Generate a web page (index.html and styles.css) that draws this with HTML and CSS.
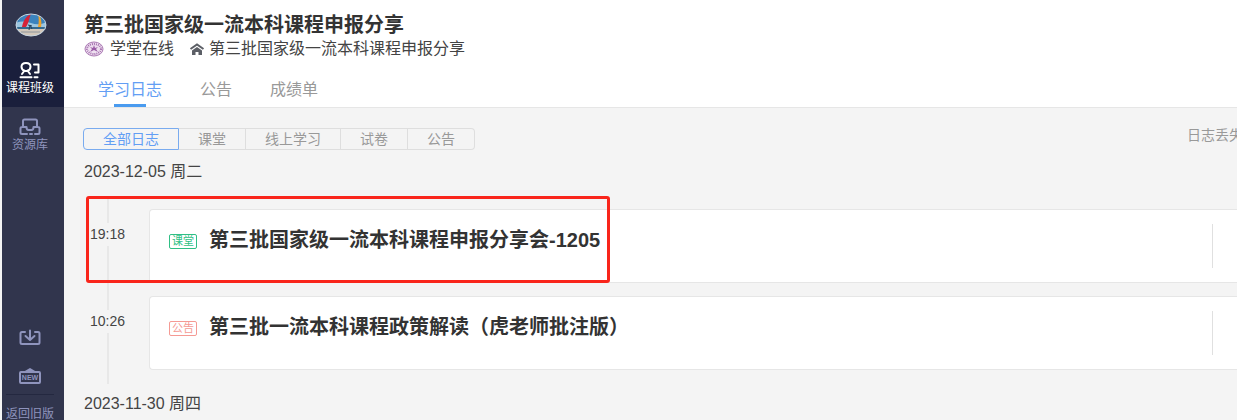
FILE: index.html
```html
<!DOCTYPE html>
<html lang="zh-CN">
  <head>
    <meta charset="UTF-8" />
    <meta name="viewport" content="width=device-width, initial-scale=1.0" />
    <title>第三批国家级一流本科课程申报分享</title>
    <link rel="stylesheet" href="styles.css" />
  </head>
  <body>
    <nav class="sidebar">
      <svg class="avatar" viewBox="0 0 32 24">
        <defs>
          <clipPath id="oval"><ellipse cx="16" cy="12" rx="15" ry="11" /></clipPath>
        </defs>
        <g clip-path="url(#oval)">
          <rect width="32" height="24" fill="#3b83bd" />
          <path d="M0 10q8-3 16 0t16-1v7H0z" fill="#9cc6e0" />
          <rect y="14" width="32" height="2" fill="#34698f" />
          <rect y="16" width="32" height="8" fill="#d3c8bb" />
          <path d="M7 14C8 8 11 3 16 1c-2 4-2 9-5 13z" fill="#d52238" />
          <path d="M23 14c1-5 1-9 0-13 3 3 4 8 3 13z" fill="#eda32d" />
          <path d="M14 17l1-5 2 4M13 12l4 1" stroke="#27415a" fill="none" />
          <path d="M6 19h19" stroke="#8e969d" />
        </g>
        <ellipse cx="16" cy="12" rx="15" ry="11" fill="none" stroke="#c9d5df" />
      </svg>
      <a class="nav-item active" href="#">
        <svg class="nav-icon" viewBox="0 0 22 18">
          <path d="M5.500 10C3.300 9 2.500 7.500 2.500 5.800 2.500 3.400 4.500 2 7 2s4.500 1.400 4.500 3.800c0 1.700-.8 3.200-3 4.200M5.500 9.500 3 13M8.500 9.500l2.500 3.500M5.500 10h3M15 3.500h4.500v8H16M1.500 16.200h11M15.500 16.200h3" />
        </svg>
        <span>课程班级</span>
      </a>
      <a class="nav-item" href="#">
        <svg class="nav-icon" viewBox="0 0 22 18">
          <path d="M4 9V3q0-1.500 1.500-1.500h11Q18 1.500 18 3v6M8 16H3q-1.500 0-1.500-1.500v-4Q1.500 9 3 9h4.500q0 3 2 3h3q2 0 2-3H19q1.500 0 1.500 1.500v4Q20.500 16 19 16h-3M11 16h2" />
        </svg>
        <span>资源库</span>
      </a>
      <div class="nav-bottom">
        <a class="tool" href="#" aria-label="下载">
          <svg class="nav-icon" viewBox="0 0 22 18">
            <path d="M6 3H3Q1.500 3 1.500 4.500v9Q1.500 15 3 15h16q1.500 0 1.500-1.500v-9Q20.500 3 19 3h-3M11 1.500v9M6.500 7l4.500 4 4.500-4" />
          </svg>
        </a>
        <a class="tool" href="#" aria-label="新功能">
          <svg class="nav-icon" viewBox="0 0 22 18">
            <rect x="1" y="5" width="20" height="11" rx="1" />
            <path d="M6 5l5-3 5 3" />
            <text x="11" y="13">NEW</text>
          </svg>
        </a>
        <a class="old-version" href="#">返回旧版</a>
      </div>
    </nav>

    <main class="main">
      <header class="header">
        <h1>第三批国家级一流本科课程申报分享</h1>
        <div class="meta">
          <svg class="school-logo" viewBox="0 0 20 16">
            <ellipse cx="10" cy="8" rx="9" ry="7" fill="#eee0f0" stroke="#aa79b3" />
            <ellipse cx="10" cy="8" rx="7" ry="5" fill="none" stroke="#a56eaf" stroke-width="2" stroke-dasharray="1 1" />
            <path d="M10 4l1 3 3-1-2 2 2 3-4-2-4 2 2-3-2-2 3 1z" fill="#9a5ca6" />
          </svg>
          <span class="school">学堂在线</span>
          <svg class="home" viewBox="0 0 16 16">
            <path d="M1.500 8 8 3.500 14.500 8" fill="none" stroke="#5c5f66" stroke-width="2" />
            <path d="M3 9.500 8 6l5 3.500V14H9.500v-3h-3v3H3z" fill="#5c5f66" />
          </svg>
          <span>第三批国家级一流本科课程申报分享</span>
        </div>
        <div class="tabs">
          <a class="tab active" href="#">学习日志</a>
          <a class="tab" href="#">公告</a>
          <a class="tab" href="#">成绩单</a>
        </div>
      </header>

      <div class="toolbar">
        <div class="filters">
          <button class="active">全部日志</button>
          <button>课堂</button>
          <button>线上学习</button>
          <button>试卷</button>
          <button>公告</button>
        </div>
        <a class="lost" href="#">日志丢失</a>
      </div>

      <h2 class="date">2023-12-05 周二</h2>
      <div class="timeline">
        <div class="entry">
          <div class="time"><span>19:18</span></div>
          <div class="card">
            <span class="badge lesson">课堂</span>
            <h3>第三批国家级一流本科课程申报分享会-1205</h3>
            <span class="divider"></span>
          </div>
          <div class="highlight"></div>
        </div>
        <div class="entry">
          <div class="time"><span>10:26</span></div>
          <div class="card">
            <span class="badge notice">公告</span>
            <h3>第三批一流本科课程政策解读（虎老师批注版）</h3>
            <span class="divider"></span>
          </div>
        </div>
      </div>
      <h2 class="date">2023-11-30 周四</h2>
    </main>
  </body>
</html>
```
FILE: styles.css
```css
* {
  box-sizing: border-box;
}

body {
  display: flex;
  height: 100vh;
  margin: 0;
  padding-left: 2px;
  overflow: hidden;
  background-color: #f4f4f4;
  color: #444;
  font-family: "Liberation Sans", "Noto Sans CJK SC", sans-serif;
}

a {
  color: inherit;
  text-decoration: none;
}

h1,
h2,
h3 {
  margin: 0;
}

.sidebar {
  display: flex;
  flex-direction: column;
  align-items: center;
  flex: none;
  width: 62px;
  height: 100vh;
  overflow: hidden;
  background-color: #31354d;
  color: #8f94bd;
  font-size: 12px;
}

.avatar {
  flex: none;
  width: 32px;
  height: 24px;
  margin: 13px 4px 13px 0;
}

.nav-item {
  display: flex;
  flex-direction: column;
  align-items: center;
  width: 100%;
  height: 57px;
  padding: 11px 6px 0 0;
  line-height: 18px;
  white-space: nowrap;
}

.nav-item.active {
  background-color: #1a1f3c;
  color: #fff;
}

.nav-icon {
  width: 22px;
  height: 18px;
  fill: none;
  stroke: currentColor;
  stroke-width: 2;
  stroke-linecap: round;
  stroke-linejoin: round;
}

.nav-icon text {
  fill: currentColor;
  stroke: none;
  font-size: 7px;
  font-weight: bold;
  text-anchor: middle;
}

.nav-bottom {
  display: flex;
  flex-direction: column;
  align-items: center;
  margin-top: auto;
  margin-right: 6px;
}

.tool {
  display: flex;
  height: 38px;
}

.old-version {
  margin-top: -11px;
  padding-top: 13px;
  border-top: 1px solid #242840;
  line-height: 12px;
  white-space: nowrap;
}

.main {
  flex: 1;
  min-width: 0;
}

.header {
  height: 108px;
  padding: 12px 20px 0;
  border-bottom: 1px solid #e6e6e6;
  background-color: #fff;
}

h1 {
  color: #333;
  font-size: 20px;
  line-height: 27px;
}

.meta {
  display: flex;
  align-items: center;
  font-size: 16px;
  line-height: 20px;
}

.school-logo {
  width: 20px;
  height: 16px;
  margin-right: 6px;
}

.home {
  width: 16px;
  height: 16px;
  margin: 0 4px 0 15px;
}

.tabs {
  display: flex;
  gap: 38px;
  margin-top: 17px;
  padding-left: 14px;
  color: #999;
  font-size: 16px;
}

.tab {
  display: flex;
  flex-direction: column;
  align-items: center;
  height: 31px;
  line-height: 27px;
}

.tab.active {
  color: #639ef4;
}

.tab.active::after {
  content: "";
  width: 32px;
  height: 3px;
  margin-top: 1px;
  background-color: #4a9bef;
}

.toolbar {
  display: flex;
  justify-content: space-between;
  align-items: center;
  margin: 20px -6px 10px 19px;
}

.filters {
  display: flex;
}

.filters button {
  height: 22px;
  padding: 0 19px;
  border: solid #dedede;
  border-width: 1px 1px 1px 0;
  background: none;
  color: #999;
  font-family: inherit;
  font-size: 14px;
  line-height: 20px;
}

.filters button:first-child {
  border-radius: 4px 0 0 4px;
}

.filters button:last-child {
  border-radius: 0 4px 4px 0;
}

.filters .active {
  border: 1px solid #79abef;
  color: #639ef4;
}

.lost {
  margin-top: -8px;
  color: #999;
  font-size: 14px;
  line-height: 20px;
}

.date {
  padding-left: 20px;
  font-size: 16px;
  font-weight: normal;
  line-height: 24px;
}

.timeline {
  padding: 12px 0 8px 22px;
}

.entry {
  display: flex;
  position: relative;
}

.time {
  display: flex;
  flex-direction: column;
  align-items: center;
  width: 43px;
  margin-right: 20px;
  font-size: 14px;
  line-height: 23px;
}

.time::before,
.time::after {
  content: "";
  width: 2px;
  height: 27px;
  background-color: #e8e8e8;
}

.time::after {
  flex: 1;
}

.card {
  display: flex;
  align-items: flex-start;
  flex: 1;
  margin-top: 13px;
  padding: 14px 24px 14px 19px;
  border: 1px solid #e6e6e6;
  border-right: none;
  border-radius: 4px 0 0 4px;
  background-color: #fff;
}

.entry:last-child .card {
  margin-bottom: 14px;
}

.badge {
  margin: 10px 12px 0 0;
  padding: 0 2px;
  border: 1px solid;
  border-radius: 2px;
  font-size: 11px;
  line-height: 13px;
}

.lesson {
  color: #2fbf85;
}

.notice {
  color: #f59a94;
}

h3 {
  color: #333;
  font-size: 20px;
  line-height: 32px;
}

.divider {
  width: 1px;
  height: 44px;
  margin-left: auto;
  background-color: #e0e0e0;
}

/* red frame drawn over the first entry */
.highlight {
  position: absolute;
  top: 0;
  left: 0;
  width: 524px;
  height: 100%;
  border: 3px solid #f9251b;
  border-radius: 3px;
}
```
